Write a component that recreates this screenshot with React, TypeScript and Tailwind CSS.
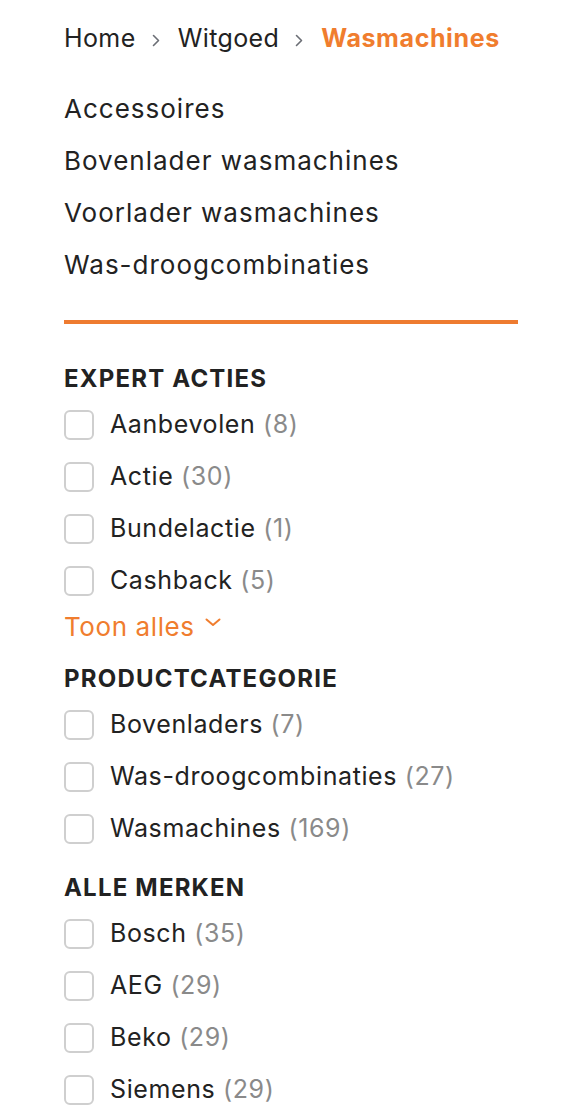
const orange = 'text-[#f07d2e]'

const links = ['Accessoires', 'Bovenlader wasmachines', 'Voorlader wasmachines', 'Was-droogcombinaties']

const sections = [
  {
    title: 'EXPERT ACTIES',
    items: [
      { label: 'Aanbevolen', count: 8 },
      { label: 'Actie', count: 30 },
      { label: 'Bundelactie', count: 1 },
      { label: 'Cashback', count: 5 },
    ],
    more: true,
  },
  {
    title: 'PRODUCTCATEGORIE',
    items: [
      { label: 'Bovenladers', count: 7 },
      { label: 'Was-droogcombinaties', count: 27 },
      { label: 'Wasmachines', count: 169 },
    ],
    more: false,
  },
  {
    title: 'ALLE MERKEN',
    items: [
      { label: 'Bosch', count: 35 },
      { label: 'AEG', count: 29 },
      { label: 'Beko', count: 29 },
      { label: 'Siemens', count: 29 },
    ],
    more: false,
  },
]

function Crumb() {
  return (
    <svg width="8" height="13" viewBox="0 0 8 13" className="ml-[16px] mr-[18px] mt-[2px]">
      <path d="M1.5 1.5 L6.5 6.5 L1.5 11.5" fill="none" stroke="#6b6e75" strokeWidth="1.6" strokeLinecap="round" strokeLinejoin="round" />
    </svg>
  )
}

export default function App() {
  return (
    <div className="min-h-screen bg-white pl-[64px] pt-[13px] text-[#222222] font-['Inter','Noto_Sans',sans-serif]">
      <nav className="flex items-center h-[52px] text-[25px] tracking-[0.4px]">
        <span>Home</span>
        <Crumb />
        <span>Witgoed</span>
        <Crumb />
        <span className={`font-bold tracking-[0.6px] ${orange}`}>Wasmachines</span>
      </nav>

      <ul className="mt-[17px]">
        {links.map((l) => (
          <li key={l} className="h-[52px] flex items-center text-[26px] tracking-[1px]">
            {l}
          </li>
        ))}
      </ul>

      <div className="mt-[30px] w-[454px] h-[4px] bg-[#ee7b30]" />

      <div className="mt-[39px]">
        {sections.map((s, i) => (
          <section key={s.title} className={i === 0 ? '' : 'mt-[17px]'}>
            <h3 className="h-[32px] flex items-center text-[24px] font-bold tracking-[1.2px]">{s.title}</h3>
            <ul className="mt-[4px]">
              {s.items.map((it) => (
                <li key={it.label} className="h-[52px] flex items-center">
                  <span className="w-[30px] h-[30px] rounded-[6px] border-2 border-[#cfcfcf] bg-white shrink-0" />
                  <span className="ml-[16px] text-[25px] tracking-[0.6px]">
                    {it.label} <span className="text-[#8a8a8a]">({it.count})</span>
                  </span>
                </li>
              ))}
            </ul>
            {s.more && (
              <div className={`h-[39px] flex items-center text-[26px] tracking-[0.6px] ${orange}`}>
                Toon alles
                <svg width="16" height="9" viewBox="0 0 16 9" className="ml-[10px] -mt-[8px]">
                  <path d="M1.5 1.5 L8 7 L14.5 1.5" fill="none" stroke="#f07d2e" strokeWidth="2" strokeLinecap="round" strokeLinejoin="round" />
                </svg>
              </div>
            )}
          </section>
        ))}
      </div>
    </div>
  )
}
